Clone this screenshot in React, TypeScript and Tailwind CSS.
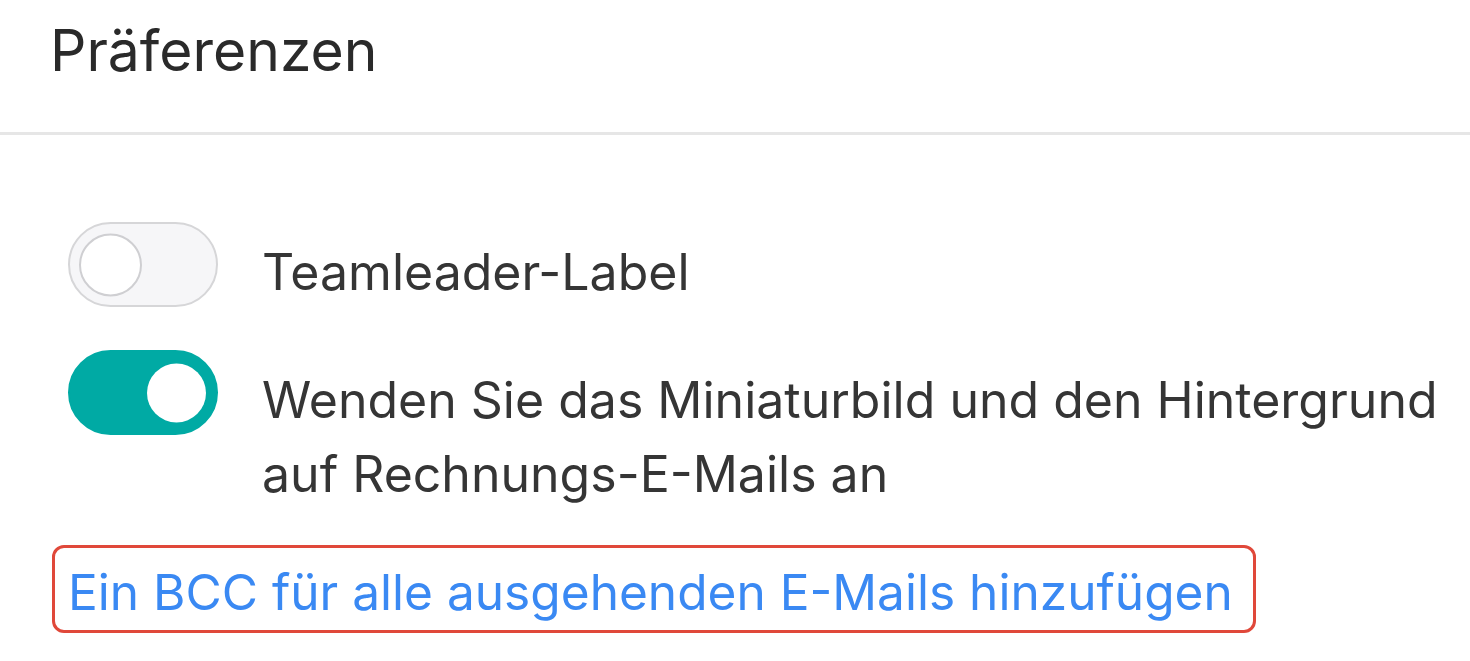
import { useState } from "react";

function Toggle({ on, onChange }: { on: boolean; onChange: () => void }) {
  return (
    <button
      type="button"
      onClick={onChange}
      aria-pressed={on}
      className={`relative h-[85px] w-[150px] shrink-0 rounded-full border-2 ${
        on ? "border-[#00aaa4] bg-[#00aaa4]" : "border-[#d6d6d8] bg-[#f6f6f8]"
      }`}
    >
      <span
        className={`absolute top-1/2 -translate-y-1/2 rounded-full bg-white ${
          on
            ? "left-[77px] h-[59px] w-[59px]"
            : "left-[9px] h-[63px] w-[63px] border-2 border-[#cfcfd2]"
        }`}
      />
    </button>
  );
}

export default function App() {
  const [label, setLabel] = useState(false);
  const [thumb, setThumb] = useState(true);

  return (
    <div className="h-[661px] w-[1470px] overflow-hidden bg-white font-['Inter',sans-serif] text-[#353535]">
      <div className="h-[135px] border-b-[3px] border-[#e6e6e6] px-[50px] pt-[16px]">
        <h1 className="text-[57px] leading-[70px] font-normal text-[#2a2a2a]">
          Präferenzen
        </h1>
      </div>

      <div className="flex flex-col gap-[41px] pt-[87px] pl-[68px]">
        <div className="flex items-start gap-11">
          <Toggle on={label} onChange={() => setLabel(!label)} />
          <span className="pt-[13px] text-[50px] leading-[74px]">
            Teamleader-Label
          </span>
        </div>

        <div className="flex items-start gap-11">
          <Toggle on={thumb} onChange={() => setThumb(!thumb)} />
          <span className="w-[1195px] shrink-0 pt-[13px] text-[50px] leading-[74px]">
            Wenden Sie das Miniaturbild und den Hintergrund auf
            Rechnungs-E-Mails an
          </span>
        </div>
      </div>

      <div className="mt-[34px] ml-[52px] w-[1204px] rounded-[12px] border-[3px] border-[#e0483a] pt-[7px] pb-[1px] pl-[13px]">
        <a href="#" className="text-[49.6px] leading-[74px] text-[#3a89f3]">
          Ein BCC für alle ausgehenden E-Mails hinzufügen
        </a>
      </div>
    </div>
  );
}
